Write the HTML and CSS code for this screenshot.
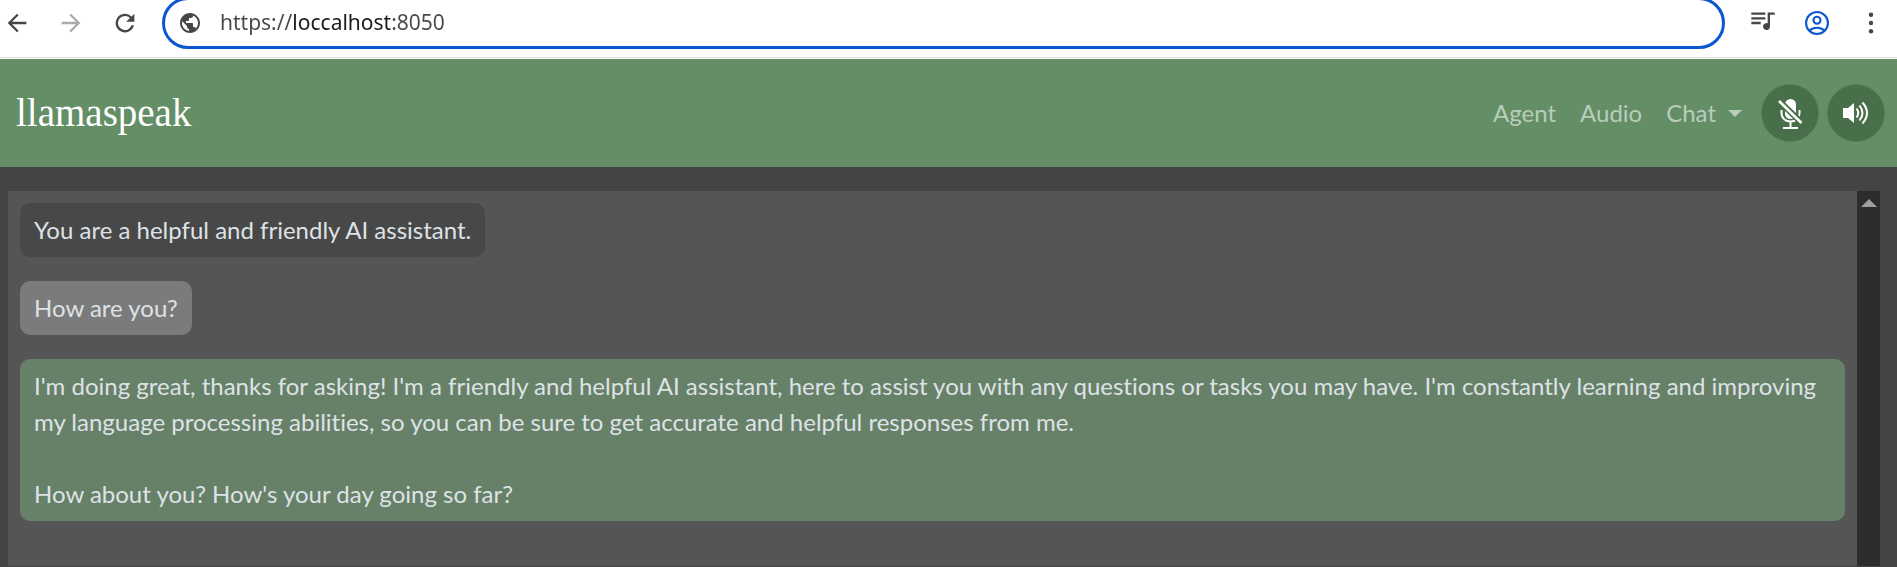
FILE: index.html
```html
<!DOCTYPE html>
<html lang="en">
<head>
  <meta charset="UTF-8" />
  <meta name="viewport" content="width=device-width, initial-scale=1.0" />
  <title>llamaspeak</title>
  <link rel="stylesheet" href="styles.css">
</head>
<body>
  <div class="toolbar">
    <button class="tool-btn" aria-label="Back">
      <svg width="28" height="28" viewBox="0 0 24 24"><path d="M20 11H7.8l5.6-5.6L12 4l-8 8 8 8 1.4-1.4L7.8 13H20z"/></svg>
    </button>
    <button class="tool-btn" aria-label="Forward" disabled>
      <svg width="28" height="28" viewBox="0 0 24 24"><path d="M4 11h12.2l-5.6-5.6L12 4l8 8-8 8-1.4-1.4 5.6-5.6H4z"/></svg>
    </button>
    <button class="tool-btn" aria-label="Reload">
      <svg width="28" height="28" viewBox="0 0 24 24"><path d="M17.65 6.35A8 8 0 1 0 19.73 14h-2.08A6 6 0 1 1 12 6c1.66 0 3.14.69 4.22 1.78L13 11h7V4z"/></svg>
    </button>
    <div class="address">
      <svg width="24" height="24" viewBox="0 0 24 24"><path d="M12 2C6.480 2 2 6.480 2 12s4.480 10 10 10 10-4.480 10-10S17.520 2 12 2zm-1 17.930c-3.950-.49-7-3.850-7-7.930 0-.62.08-1.210.21-1.790L9 15v1c0 1.100.9 2 2 2v1.930zm6.900-2.540c-.26-.81-1-1.390-1.900-1.390h-1v-3c0-.55-.45-1-1-1H8v-2h2c.55 0 1-.45 1-1V7h2c1.100 0 2-.9 2-2v-.41c2.930 1.190 5 4.060 5 7.410 0 2.080-.8 3.970-2.100 5.390z"/></svg>
      <input type="text" class="url" value="https://loccalhost:8050" aria-label="Address" />
    </div>
    <button class="tool-btn" aria-label="Media controls">
      <svg width="28" height="28" viewBox="0 0 24 24"><path d="M2 3h12v2H2zM2 7h12v2H2zM2 11h8v2H2zM16 3h6v2h-4v10a3 3 0 1 1-2-2.800z"/></svg>
    </button>
    <button class="tool-btn profile" aria-label="Profile">
      <svg width="28" height="28" viewBox="0 0 24 24" fill="none" stroke="#0b57d0" stroke-width="1.800"><circle cx="12" cy="12" r="9.400"/><circle cx="12" cy="9.700" r="3"/><path d="M5.500 18.500c3.500-3.300 9.500-3.300 13 0"/></svg>
    </button>
    <button class="tool-btn" aria-label="Menu">
      <svg width="28" height="28" viewBox="0 0 24 24"><circle cx="12" cy="5" r="1.900"/><circle cx="12" cy="12" r="1.900"/><circle cx="12" cy="19" r="1.900"/></svg>
    </button>
  </div>

  <nav class="navbar">
    <a class="brand" href="#">llamaspeak</a>
    <div class="nav-links">
      <a href="#">Agent</a>
      <a href="#">Audio</a>
      <a href="#" class="dropdown">Chat</a>
    </div>
    <div class="nav-buttons">
      <button class="round-btn" aria-label="Unmute microphone">
        <svg width="30" height="34" viewBox="0 0 30 34" fill="none" stroke="#fff" stroke-width="2">
          <rect x="10" y="3" width="11" height="20" rx="5.500" fill="#fff" stroke="none"/>
          <path d="M6.500 14v3.500a9 8 0 0 0 18 0V14M15.500 25v6M8 32h15"/>
          <path d="M3 4l24 23" stroke="#486f49" stroke-width="6"/>
          <path d="M4 5l22.500 22" stroke-width="2.500"/>
        </svg>
      </button>
      <button class="round-btn" aria-label="Mute speaker">
        <svg width="30" height="30" viewBox="0 0 30 30" fill="none" stroke="#fff" stroke-width="2">
          <path d="M2 10h5l6-5v20l-6-5H2z" fill="#fff" stroke="none"/>
          <path d="M15.500 10.500q3.500 4.500 0 9M18.500 7.500q6 7.500 0 15M21.500 4.500q9 10.500 0 21"/>
        </svg>
      </button>
    </div>
  </nav>

  <main class="chat">
    <div class="messages">
      <div class="msg system">You are a helpful and friendly AI assistant.</div>
      <div class="msg user">How are you?</div>
      <div class="msg bot">I'm doing great, thanks for asking! I'm a friendly and helpful AI assistant, here to assist you with any questions or tasks you may have. I'm constantly learning and improving my language processing abilities, so you can be sure to get accurate and helpful responses from me.<br><br>How about you? How's your day going so far?</div>
    </div>
    <div class="scrollbar">
      <button class="scroll-up" aria-label="Scroll up">
        <svg width="16" height="8" viewBox="0 0 16 8"><path d="M8 0l8 8H0z"/></svg>
      </button>
    </div>
  </main>
</body>
</html>
```
FILE: styles.css
```css
* {
  box-sizing: border-box;
}
body {
  margin: 0;
  height: 100vh;
  display: flex;
  flex-direction: column;
  overflow: hidden;
  font-family: Lato, sans-serif;
  font-size: 24px;
  line-height: 36px;
  font-variant-ligatures: none;
  background-color: #444;
  color: #dee2e6;
}
button {
  display: flex;
  align-items: center;
  justify-content: center;
  padding: 0;
  border: none;
  background: none;
  cursor: pointer;
}

/* browser toolbar */
.toolbar {
  display: flex;
  align-items: center;
  gap: 26px;
  margin-top: -3px;
  padding: 0 12px 8px 3px;
  background-color: #fff;
  border-bottom: 1px solid #dcdcdc;
}
.toolbar svg {
  flex: none;
  fill: #474747;
}
.tool-btn:disabled svg {
  fill: #ababab;
}
.toolbar .profile svg {
  fill: none;
}
.address {
  flex: 1;
  display: flex;
  align-items: center;
  gap: 18px;
  height: 52px;
  margin: 0 -2px 0 -3px;
  padding: 0 13px;
  border: 3px solid #0b57d0;
  border-radius: 26px;
}
.url {
  flex: 1;
  min-width: 0;
  padding: 0 0 2px;
  border: none;
  outline: none;
  font-family: "Noto Sans", sans-serif;
  font-size: 21px;
  /* host is darker than the scheme and the port */
  color: transparent;
  background: linear-gradient(to right, #484848 73px, #1a1a1a 73px, #1a1a1a 170px, #484848 170px);
  background-clip: text;
  -webkit-background-clip: text;
}

/* page header */
.navbar {
  display: flex;
  align-items: center;
  padding: 25px 12px 25px 16px;
  background-color: #648e66;
  border-top: 1px solid #fff;
}
.brand {
  margin-right: auto;
  font-family: "Liberation Serif", serif;
  font-size: 39px;
  color: #fff;
  text-decoration: none;
}
.nav-links {
  display: flex;
  gap: 24px;
  margin-right: 19px;
}
.nav-links a {
  color: #b9cdba;
  text-decoration: none;
}
.dropdown {
  display: flex;
  align-items: center;
  gap: 12px;
}
.dropdown::after {
  content: "";
  border-top: 7px solid #b9cdba;
  border-left: 7px solid transparent;
  border-right: 7px solid transparent;
}
.nav-buttons {
  display: flex;
  gap: 8px;
}
.round-btn {
  width: 58px;
  height: 58px;
  border-radius: 50%;
  border: 1px solid #587a59;
  background-color: #486f49;
}

/* chat history */
.chat {
  flex: 1;
  display: flex;
  min-height: 0;
  margin: 24px 17px 1px 8px;
  background-color: #555;
}
.messages {
  flex: 1;
  display: flex;
  flex-direction: column;
  align-items: flex-start;
  gap: 24px;
  padding: 12px;
}
.msg {
  padding: 9px 14px;
  border-radius: 10px;
}
.system {
  background-color: #484848;
}
.user {
  background-color: #7b7b7b;
}
.bot {
  background-color: #668168;
}
.scrollbar {
  width: 23px;
  background-color: #2c2c2c;
}
.scroll-up {
  width: 100%;
  height: 24px;
}
.scroll-up svg {
  fill: #9f9f9f;
}
```
